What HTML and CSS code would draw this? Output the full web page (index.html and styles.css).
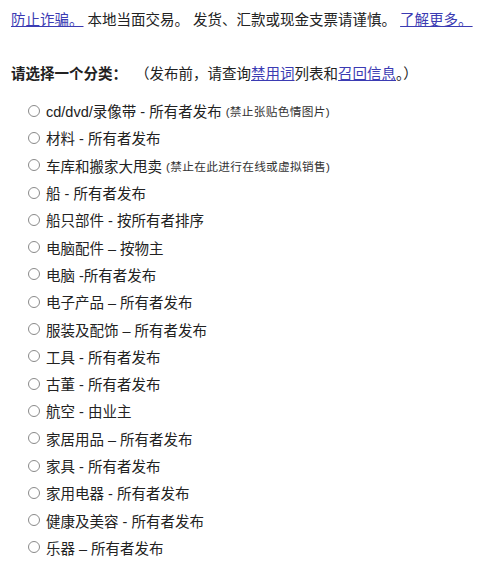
FILE: index.html
```html
<!DOCTYPE html>
<html lang="zh">
<head>
<meta charset="utf-8">
<link rel="stylesheet" href="styles.css">
</head>
<body>
<div class="page">
  <p class="notice"><a href="#">防止诈骗。</a> 本地当面交易。 发货、汇款或现金支票请谨慎。 <a href="#">了解更多。</a></p>
  <p class="heading"><b>请选择一个分类：</b> <span class="note">（发布前，请查询<a href="#">禁用词</a>列表和<a href="#">召回信息</a>。）</span></p>
  <ul class="cats">
    <li><span class="radio"></span>cd/dvd/录像带 - 所有者发布 <small>(禁止张贴色情图片)</small></li>
    <li><span class="radio"></span>材料 - 所有者发布</li>
    <li><span class="radio"></span>车库和搬家大甩卖 <small>(禁止在此进行在线或虚拟销售)</small></li>
    <li><span class="radio"></span>船 - 所有者发布</li>
    <li><span class="radio"></span>船只部件 - 按所有者排序</li>
    <li><span class="radio"></span>电脑配件 – 按物主</li>
    <li><span class="radio"></span>电脑 -所有者发布</li>
    <li><span class="radio"></span>电子产品 – 所有者发布</li>
    <li><span class="radio"></span>服装及配饰 – 所有者发布</li>
    <li><span class="radio"></span>工具 - 所有者发布</li>
    <li><span class="radio"></span>古董 - 所有者发布</li>
    <li><span class="radio"></span>航空 - 由业主</li>
    <li><span class="radio"></span>家居用品 – 所有者发布</li>
    <li><span class="radio"></span>家具 - 所有者发布</li>
    <li><span class="radio"></span>家用电器 - 所有者发布</li>
    <li><span class="radio"></span>健康及美容 - 所有者发布</li>
    <li><span class="radio"></span>乐器 – 所有者发布</li>
  </ul>
</div>
</body>
</html>
```
FILE: styles.css
```css
html, body {
  margin: 0;
  padding: 0;
  background: #ffffff;
}
body {
  font-family: "Liberation Sans", "Noto Sans CJK SC", sans-serif;
  font-size: 14.5px;
  color: #222222;
}
.page {
  padding: 11px 0 0 11px;
}
a {
  color: #3b3bb3;
  text-decoration: underline;
}
.notice {
  margin: 0;
  line-height: 18px;
}
.heading {
  margin: 36px 0 0 0;
  line-height: 18px;
}
.heading b {
  font-weight: bold;
}
.note {
  margin-left: 4px;
}
.cats {
  list-style: none;
  margin: 14px 0 0 0;
  padding: 0 0 0 17px;
}
.cats li {
  height: 27.3px;
  display: flex;
  align-items: center;
  white-space: pre;
}
.radio {
  width: 10px;
  height: 10px;
  border: 1px solid #8a8a8a;
  border-radius: 50%;
  margin-right: 6px;
  flex: none;
  background: #fff;
}
small {
  font-size: 11.7px;
  letter-spacing: 0.3px;
  color: #333333;
}
```
